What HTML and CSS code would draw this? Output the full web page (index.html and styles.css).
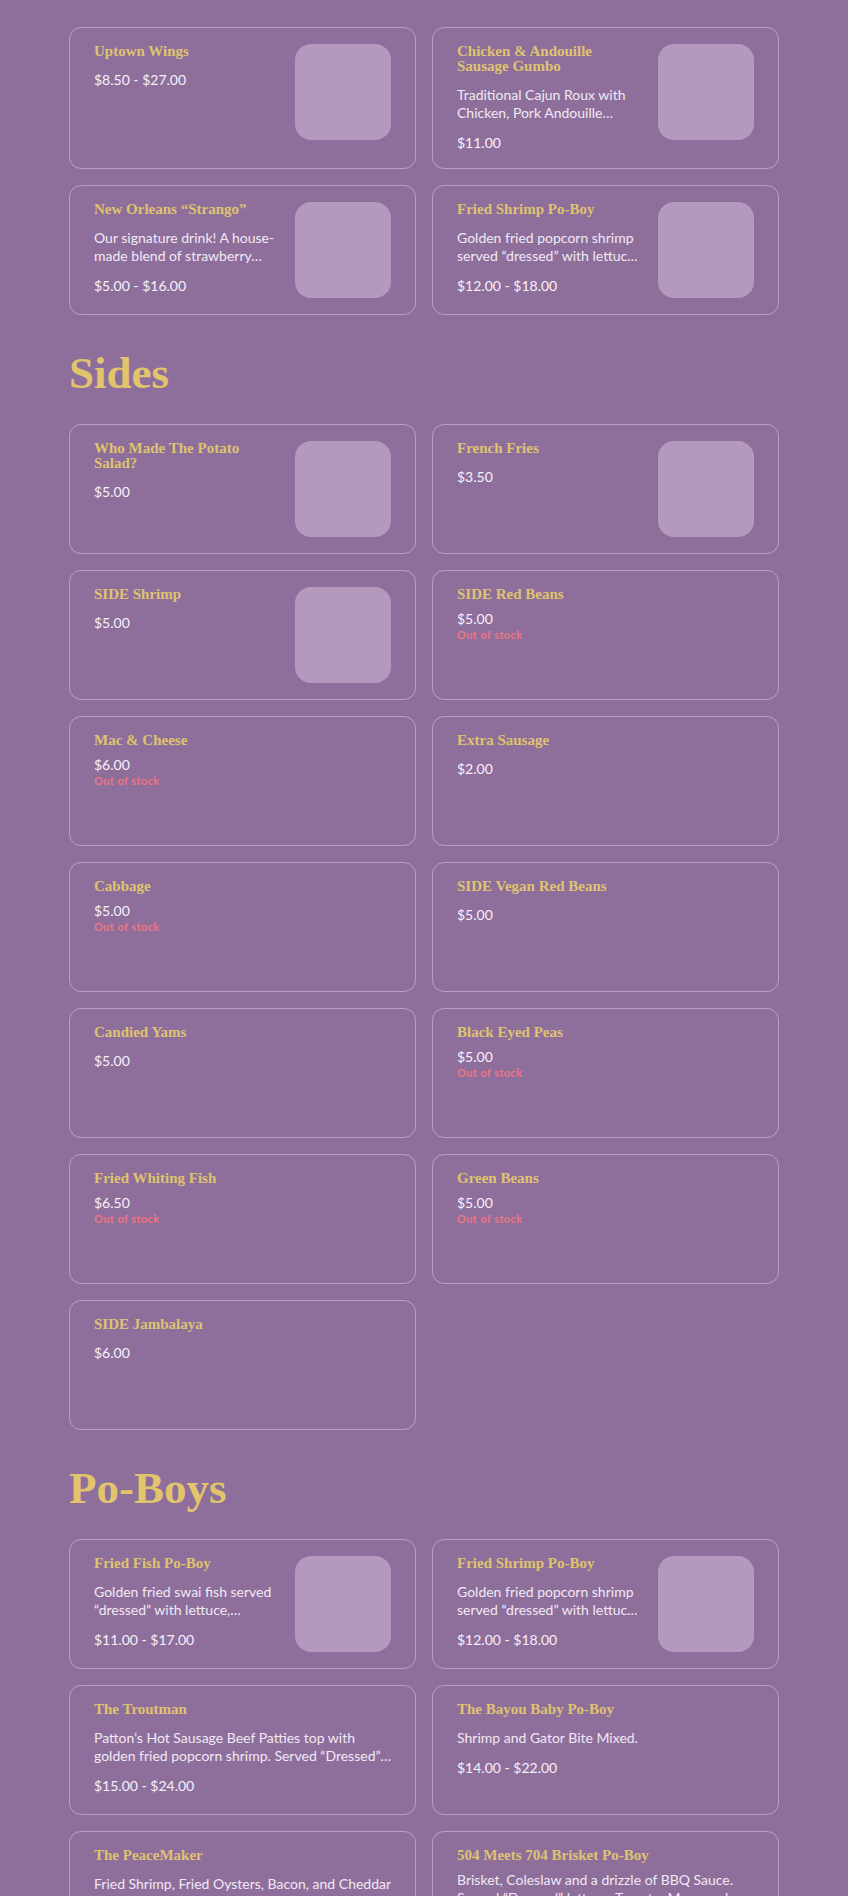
FILE: index.html
```html
<!DOCTYPE html>
<html lang="en">

<head>
    <meta charset="UTF-8">
    <meta name="viewport" content="width=device-width, initial-scale=1.0">
    <title>Menu</title>
    <link rel="stylesheet" href="styles.css">
</head>

<body>
    <main class="menu">
        <section class="section">
            <div class="grid">
                <div class="item">
                    <div class="info">
                        <h3 class="name">Uptown Wings</h3>
                        <p class="price">$8.50 - $27.00</p>
                    </div>
                    <div class="thumb"></div>
                </div>
                <div class="item">
                    <div class="info">
                        <h3 class="name">Chicken &amp; Andouille Sausage Gumbo</h3>
                        <p class="desc">Traditional Cajun Roux with Chicken, Pork Andouille Sausage, Holy Trinity and Rice.</p>
                        <p class="price">$11.00</p>
                    </div>
                    <div class="thumb"></div>
                </div>
                <div class="item">
                    <div class="info">
                        <h3 class="name">New Orleans “Strango”</h3>
                        <p class="desc">Our signature drink! A house-made blend of strawberry lemonade and mango with a kick.</p>
                        <p class="price">$5.00 - $16.00</p>
                    </div>
                    <div class="thumb"></div>
                </div>
                <div class="item">
                    <div class="info">
                        <h3 class="name">Fried Shrimp Po-Boy</h3>
                        <p class="desc">Golden fried popcorn shrimp served “dressed” with lettuce, tomato, pickles and mayo.</p>
                        <p class="price">$12.00 - $18.00</p>
                    </div>
                    <div class="thumb"></div>
                </div>
            </div>
        </section>

        <section class="section">
            <h2 class="section-title">Sides</h2>
            <div class="grid">
                <div class="item">
                    <div class="info">
                        <h3 class="name">Who Made The Potato Salad?</h3>
                        <p class="price">$5.00</p>
                    </div>
                    <div class="thumb"></div>
                </div>
                <div class="item">
                    <div class="info">
                        <h3 class="name">French Fries</h3>
                        <p class="price">$3.50</p>
                    </div>
                    <div class="thumb"></div>
                </div>
                <div class="item">
                    <div class="info">
                        <h3 class="name">SIDE Shrimp</h3>
                        <p class="price">$5.00</p>
                    </div>
                    <div class="thumb"></div>
                </div>
                <div class="item sold-out">
                    <div class="info">
                        <h3 class="name">SIDE Red Beans</h3>
                        <div>
                            <p class="price">$5.00</p>
                            <p class="stock">Out of stock</p>
                        </div>
                    </div>
                </div>
                <div class="item sold-out">
                    <div class="info">
                        <h3 class="name">Mac &amp; Cheese</h3>
                        <div>
                            <p class="price">$6.00</p>
                            <p class="stock">Out of stock</p>
                        </div>
                    </div>
                </div>
                <div class="item">
                    <div class="info">
                        <h3 class="name">Extra Sausage</h3>
                        <p class="price">$2.00</p>
                    </div>
                </div>
                <div class="item sold-out">
                    <div class="info">
                        <h3 class="name">Cabbage</h3>
                        <div>
                            <p class="price">$5.00</p>
                            <p class="stock">Out of stock</p>
                        </div>
                    </div>
                </div>
                <div class="item">
                    <div class="info">
                        <h3 class="name">SIDE Vegan Red Beans</h3>
                        <p class="price">$5.00</p>
                    </div>
                </div>
                <div class="item">
                    <div class="info">
                        <h3 class="name">Candied Yams</h3>
                        <p class="price">$5.00</p>
                    </div>
                </div>
                <div class="item sold-out">
                    <div class="info">
                        <h3 class="name">Black Eyed Peas</h3>
                        <div>
                            <p class="price">$5.00</p>
                            <p class="stock">Out of stock</p>
                        </div>
                    </div>
                </div>
                <div class="item sold-out">
                    <div class="info">
                        <h3 class="name">Fried Whiting Fish</h3>
                        <div>
                            <p class="price">$6.50</p>
                            <p class="stock">Out of stock</p>
                        </div>
                    </div>
                </div>
                <div class="item sold-out">
                    <div class="info">
                        <h3 class="name">Green Beans</h3>
                        <div>
                            <p class="price">$5.00</p>
                            <p class="stock">Out of stock</p>
                        </div>
                    </div>
                </div>
                <div class="item">
                    <div class="info">
                        <h3 class="name">SIDE Jambalaya</h3>
                        <p class="price">$6.00</p>
                    </div>
                </div>
            </div>
        </section>

        <section class="section">
            <h2 class="section-title">Po-Boys</h2>
            <div class="grid">
                <div class="item">
                    <div class="info">
                        <h3 class="name">Fried Fish Po-Boy</h3>
                        <p class="desc">Golden fried swai fish served “dressed” with lettuce, tomato, pickles and mayo.</p>
                        <p class="price">$11.00 - $17.00</p>
                    </div>
                    <div class="thumb"></div>
                </div>
                <div class="item">
                    <div class="info">
                        <h3 class="name">Fried Shrimp Po-Boy</h3>
                        <p class="desc">Golden fried popcorn shrimp served “dressed” with lettuce, tomato, pickles and mayo.</p>
                        <p class="price">$12.00 - $18.00</p>
                    </div>
                    <div class="thumb"></div>
                </div>
                <div class="item">
                    <div class="info">
                        <h3 class="name">The Troutman</h3>
                        <p class="desc">Patton’s Hot Sausage Beef Patties top with golden fried popcorn shrimp. Served “Dressed” with lettuce, tomato, pickles and mayo.</p>
                        <p class="price">$15.00 - $24.00</p>
                    </div>
                </div>
                <div class="item">
                    <div class="info">
                        <h3 class="name">The Bayou Baby Po-Boy</h3>
                        <p class="desc">Shrimp and Gator Bite Mixed.</p>
                        <p class="price">$14.00 - $22.00</p>
                    </div>
                </div>
                <div class="item">
                    <div class="info">
                        <h3 class="name">The PeaceMaker</h3>
                        <p class="desc">Fried Shrimp, Fried Oysters, Bacon, and Cheddar Cheese. Served “Dressed” with lettuce, tomato and mayo.</p>
                        <p class="price">$16.00 - $25.00</p>
                    </div>
                </div>
                <div class="item sold-out">
                    <div class="info">
                        <h3 class="name">504 Meets 704 Brisket Po-Boy</h3>
                        <p class="desc">Brisket, Coleslaw and a drizzle of BBQ Sauce. Served “Dressed” lettuce, Tomato, Mayo and pickles.</p>
                        <div>
                            <p class="price">$15.00 - $24.00</p>
                            <p class="stock">Out of stock</p>
                        </div>
                    </div>
                </div>
            </div>
        </section>
    </main>
</body>

</html>
```

FILE: styles.css
```css
* {
    margin: 0;
    padding: 0;
    box-sizing: border-box;
}

body {
    background: #8e6f9c;
    font-family: 'Lato', sans-serif;
    color: #f7f1f9;
}

.menu {
    width: 710px;
    margin: 0 auto;
    padding-top: 27px;
}

.section + .section {
    margin-top: 36px;
}

.section-title {
    font-family: 'Liberation Serif', serif;
    font-weight: 700;
    font-size: 45px;
    line-height: 45px;
    color: #e1c46c;
    margin-bottom: 28px;
}

.grid {
    display: grid;
    grid-template-columns: 1fr 1fr;
    gap: 16px;
}

.item {
    display: flex;
    align-items: flex-start;
    gap: 16px;
    min-height: 130px;
    padding: 16px 24px;
    border: 1px solid rgba(255, 255, 255, 0.35);
    border-radius: 12px;
}

.info {
    flex: 1;
    min-width: 0;
    display: flex;
    flex-direction: column;
    gap: 12px;
}

.sold-out .info {
    gap: 8px;
}

.name {
    font-family: 'Liberation Serif', serif;
    font-weight: 700;
    font-size: 15px;
    line-height: 15px;
    color: #dfc36f;
}

.desc {
    font-size: 14px;
    line-height: 18px;
    color: #f1e9f4;
    display: -webkit-box;
    -webkit-line-clamp: 2;
    -webkit-box-orient: vertical;
    overflow: hidden;
}

.price {
    font-size: 14px;
    line-height: 18px;
}

.stock {
    font-size: 11px;
    line-height: 14px;
    font-weight: 700;
    letter-spacing: 0.4px;
    color: #ee7482;
}

.thumb {
    flex: none;
    width: 96px;
    height: 96px;
    border-radius: 16px;
    background: #b299bd;
}
```
